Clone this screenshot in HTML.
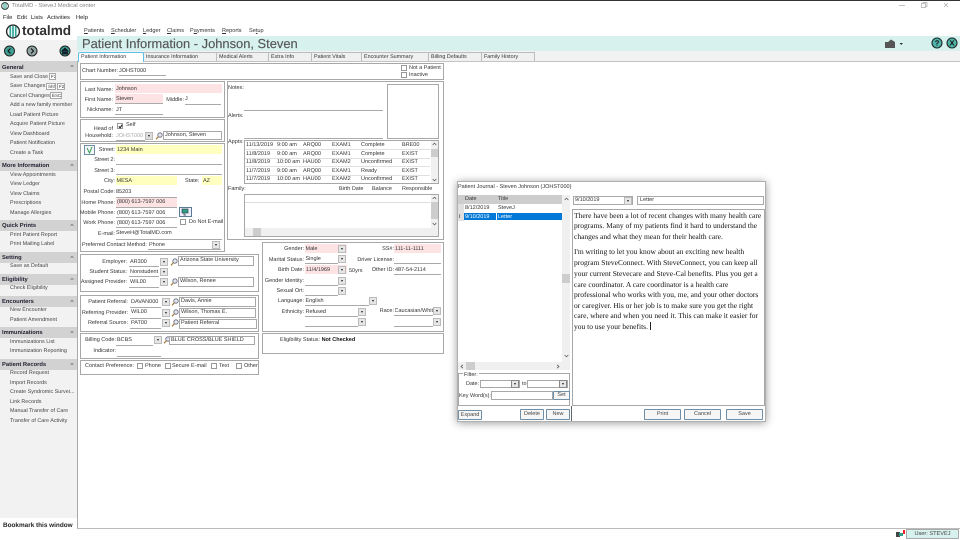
<!DOCTYPE html>
<html><head><meta charset="utf-8"><title>TotalMD</title>
<style>
html,body{margin:0;padding:0;background:#fff}
#p{position:relative;width:960px;height:540px;overflow:hidden;background:#fff;font-family:"Liberation Sans",sans-serif;font-size:5.5px;color:#333;text-rendering:geometricPrecision;filter:blur(.3px)}
#p div,#p span,#p svg{position:absolute}
.t{white-space:nowrap;line-height:8px;height:8px}
.r{text-align:right}
.h{background:#d2d2d2;left:0;width:77px;height:11px}
.hh{left:2px;font-weight:bold;font-size:5.8px;color:#223;margin-top:.8px}
.c{left:70px;width:4px;height:4px}
.i{left:10px;color:#444;font-size:5.4px}
.n{font-size:5.6px;margin-top:.5px}
.g{border:1px solid #a8a8a8;box-sizing:border-box;background:#fff}
.u{height:1px;background:#aaa}
.pk{background:#fde3e3}
.ye{background:#ffffbf}
.b{width:8px;height:8px;background:#e6e6e6;border:1px solid #bbb;box-sizing:border-box}
.b:after{content:"";position:absolute;left:1.5px;top:2px;border:1.5px solid transparent;border-top:2px solid #222;}
.x{border:1px solid #a8a8a8;box-sizing:border-box;background:#fff;white-space:nowrap;line-height:7px;padding-left:1px;overflow:hidden}
.k{width:6px;height:6px;border:1px solid #999;box-sizing:border-box;background:#fff}
.tab{height:9px;background:#f0f0f0;border:1px solid #bcbcbc;border-bottom:0;box-sizing:border-box;line-height:8.6px;white-space:nowrap;padding-left:2px;color:#333;font-size:5.4px}
.bt{border:1px solid #6f8fa8;border-radius:1px;box-sizing:border-box;background:#f6f6f6;text-align:center;line-height:9px;color:#444;height:11px}
.sb{background:#f0f0f0}
.th{background:#cdcdcd}
.jt{font-family:"Liberation Serif",serif;font-size:7.5px;color:#111;white-space:nowrap;left:574px;line-height:10px;height:10px}
.rowl{height:1px;background:#e0e0e0;left:245px;width:185px}
</style></head><body>
<div id="p">
<svg width="0" height="0"><defs>
<symbol id="m" viewBox="0 0 8 8"><circle cx="5" cy="3" r="2.2" fill="#dfe7f0" stroke="#667" stroke-width=".8"/><path d="M3.5 4.5L1 7.3" stroke="#a67b3a" stroke-width="1.2"/></symbol>
<symbol id="ch" viewBox="0 0 6 4"><path d="M.8 3.2L3 1l2.2 2.2" fill="none" stroke="#555" stroke-width=".9"/></symbol>
</defs></svg>

<!-- window top -->
<div style="left:0;top:0;width:960px;height:1px;background:#333"></div>
<svg style="left:1px;top:2px" width="8" height="8" viewBox="0 0 8 8"><circle cx="4" cy="4" r="3.4" fill="none" stroke="#333"/><path d="M3 1v6M5 1v6" stroke="#2a9d8f"/></svg>
<span class="t" style="left:12px;top:2px;color:#888;font-size:5.8px">TotalMD - SteveJ Medical center</span>
<svg style="left:898px;top:1px" width="60" height="9" viewBox="0 0 60 9"><path d="M1 4.5h6" stroke="#aaa" stroke-width=".7"/><path d="M23.5 2.5h4v4h-4zM25 2.5v-1h4v4h-1.5" fill="none" stroke="#aaa" stroke-width=".7"/><path d="M46 2l4 4M50 2l-4 4" stroke="#aaa" stroke-width=".7"/></svg>
<span class="t" style="left:3px;top:14px;font-size:5.8px;color:#222">File</span>
<span class="t" style="left:17px;top:14px;font-size:5.8px;color:#222">Edit</span>
<span class="t" style="left:31px;top:14px;font-size:5.8px;color:#222">Lists</span>
<span class="t" style="left:47px;top:14px;font-size:5.8px;color:#222">Activities</span>
<span class="t" style="left:76px;top:14px;font-size:5.8px;color:#222">Help</span>

<!-- logo -->
<svg style="left:5px;top:24px" width="16" height="15" viewBox="0 0 16 15"><circle cx="8" cy="7.5" r="6.4" fill="none" stroke="#2c2c2c" stroke-width="1.4"/><path d="M5.3 2.5v10M8 2v11M10.7 2.500v10" stroke="#37a69b" stroke-width="1.7"/></svg>
<span class="t" style="left:22px;top:23px;height:16px;line-height:16px;font-size:13.6px;font-weight:bold;color:#333">totalmd</span>

<!-- nav -->
<span class="t n" style="left:84px;top:26px"><u>P</u>atients</span>
<span class="t n" style="left:111px;top:26px"><u>S</u>cheduler</span>
<span class="t n" style="left:143px;top:26px"><u>L</u>edger</span>
<span class="t n" style="left:167px;top:26px"><u>C</u>laims</span>
<span class="t n" style="left:190px;top:26px">P<u>a</u>yments</span>
<span class="t n" style="left:222px;top:26px"><u>R</u>eports</span>
<span class="t n" style="left:249px;top:26px">Se<u>t</u>up</span>

<!-- band -->
<div style="left:77px;top:36px;width:883px;height:15px;background:#d7f1ee"></div>
<span class="t" style="left:82px;top:36px;height:16px;line-height:16px;font-size:12.9px;color:#555;-webkit-text-stroke:.15px #555">Patient Information - Johnson, Steven</span>
<div style="left:77px;top:51px;width:883px;height:10px;background:#f2f2f2"></div>
<svg style="left:884px;top:39px" width="20" height="10" viewBox="0 0 20 10"><path d="M1 3h3l3-2.5 4 2.500v6H1z" fill="#555"/><path d="M15.500 4h3.500l-1.750 2z" fill="#333"/></svg>
<svg style="left:930px;top:37px" width="28" height="13" viewBox="0 0 28 13"><circle cx="7" cy="6" r="5" fill="#4fb3a8" stroke="#1d2b2b" stroke-width="1.100"/><text x="7" y="8.700" font-size="7.500" font-weight="bold" text-anchor="middle" fill="#111" font-family="Liberation Sans">?</text><circle cx="22" cy="6" r="5" fill="#4fb3a8" stroke="#1d2b2b" stroke-width="1.100"/><text x="22" y="8.700" font-size="7.500" font-weight="bold" text-anchor="middle" fill="#111" font-family="Liberation Sans">X</text></svg>

<!-- tabs -->
<div class="tab" style="left:143px;top:52px;width:74px">Insurance Information</div>
<div class="tab" style="left:216px;top:52px;width:53px">Medical Alerts</div>
<div class="tab" style="left:268px;top:52px;width:44px">Extra Info</div>
<div class="tab" style="left:311px;top:52px;width:51px">Patient Vitals</div>
<div class="tab" style="left:361px;top:52px;width:68px">Encounter Summary</div>
<div class="tab" style="left:428px;top:52px;width:54px">Billing Defaults</div>
<div class="tab" style="left:481px;top:52px;width:54px">Family History</div>
<div class="tab" style="left:78px;top:52px;width:66px;height:10px;background:#fff;border:1px solid #5cc0e8;border-bottom:0;border-radius:2px 2px 0 0;z-index:2">Patient Information</div>

<!-- sidebar -->
<div style="left:0;top:40px;width:77px;height:478px;background:#f2f2f2"></div>
<svg style="left:4px;top:45px" width="68" height="12" viewBox="0 0 68 12"><circle cx="5.500" cy="6" r="5" fill="#3f9f95" stroke="#222"/><path d="M6.500 3.500L4 6l2.500 2.500" fill="none" stroke="#111" stroke-width="1.100"/><circle cx="28" cy="6" r="5" fill="#8fa3a0" stroke="#222"/><path d="M27 3.500L29.500 6 27 8.500" fill="none" stroke="#111" stroke-width="1.100"/><circle cx="61" cy="6" r="5" fill="#3f9f95" stroke="#222"/><path d="M57.500 6.200L61 3l3.500 3.200M58.500 6v3h5V6" fill="#123" stroke="#111" stroke-width=".7"/></svg>

<div class="h" style="top:61px"></div><span class="t hh" style="top:63px">General</span><svg class="c" style="top:64px"><use href="#ch"/></svg>
<span class="t i" style="top:72.500px">Save and Close</span><div class="x" style="left:49px;top:73px;width:7px;height:7px;font-size:4.500px;line-height:5px;padding:0 0 0 1px">F3</div>
<span class="t i" style="top:82px">Save Changes</span><div class="x" style="left:46px;top:82.500px;width:10px;height:7px;font-size:4.500px;line-height:5px">Shft</div><div class="x" style="left:57px;top:82.500px;width:8px;height:7px;font-size:4.500px;line-height:5px">F2</div>
<span class="t i" style="top:91.500px">Cancel Changes</span><div class="x" style="left:50px;top:92px;width:12px;height:7px;font-size:4.500px;line-height:5px">ESC</div>
<span class="t i" style="top:101px">Add a new family member</span>
<span class="t i" style="top:110.500px">Load Patient Picture</span>
<span class="t i" style="top:120px">Acquire Patient Picture</span>
<span class="t i" style="top:129.500px">View Dashboard</span>
<span class="t i" style="top:139px">Patient Notification</span>
<span class="t i" style="top:148.500px">Create a Task</span>

<div class="h" style="top:160px"></div><span class="t hh" style="top:161.500px">More Information</span><svg class="c" style="top:163px"><use href="#ch"/></svg>
<span class="t i" style="top:170.500px">View Appointments</span>
<span class="t i" style="top:180px">View Ledger</span>
<span class="t i" style="top:189.500px">View Claims</span>
<span class="t i" style="top:199px">Prescriptions</span>
<span class="t i" style="top:208.500px">Manage Allergies</span>

<div class="h" style="top:220px"></div><span class="t hh" style="top:221.500px">Quick Prints</span><svg class="c" style="top:223px"><use href="#ch"/></svg>
<span class="t i" style="top:230.500px">Print Patient Report</span>
<span class="t i" style="top:240px">Print Mailing Label</span>

<div class="h" style="top:252px"></div><span class="t hh" style="top:253px">Setting</span><svg class="c" style="top:255px"><use href="#ch"/></svg>
<span class="t i" style="top:262px">Save as Default</span>

<div class="h" style="top:274px"></div><span class="t hh" style="top:275px">Eligibility</span><svg class="c" style="top:277px"><use href="#ch"/></svg>
<span class="t i" style="top:284px">Check Eligibility</span>

<div class="h" style="top:296px"></div><span class="t hh" style="top:297px">Encounters</span><svg class="c" style="top:299px"><use href="#ch"/></svg>
<span class="t i" style="top:306px">New Encounter</span>
<span class="t i" style="top:315.500px">Patient Amendment</span>

<div class="h" style="top:327px"></div><span class="t hh" style="top:328.500px">Immunizations</span><svg class="c" style="top:330px"><use href="#ch"/></svg>
<span class="t i" style="top:337.500px">Immunizations List</span>
<span class="t i" style="top:347px">Immunization Reporting</span>

<div class="h" style="top:359px"></div><span class="t hh" style="top:360px">Patient Records</span><svg class="c" style="top:362px"><use href="#ch"/></svg>
<span class="t i" style="top:369px">Record Request</span>
<span class="t i" style="top:378.500px">Import Records</span>
<span class="t i" style="top:388px">Create Syndromic Survei...</span>
<span class="t i" style="top:397.500px">Link Records</span>
<span class="t i" style="top:407px">Manual Transfer of Care</span>
<span class="t i" style="top:416.500px">Transfer of Care Activity</span>
<span class="t" style="left:3px;top:521.500px;font-weight:bold;font-size:6.400px;color:#222">Bookmark this window</span>

<!-- content frame -->
<div style="left:77px;top:61px;width:1px;height:468px;background:#aaa"></div>
<div style="left:77px;top:528px;width:883px;height:1px;background:#bbb"></div>
<div style="left:78px;top:61px;width:882px;height:1px;background:#c4c4c4"></div>

<!-- panels -->
<div class="g" style="left:80px;top:63px;width:364px;height:17px"></div>
<div class="g" style="left:80px;top:81px;width:145px;height:37px"></div>
<div class="g" style="left:80px;top:119px;width:145px;height:23px"></div>
<div class="g" style="left:80px;top:143px;width:145px;height:109px"></div>
<div class="g" style="left:80px;top:254px;width:179px;height:38px"></div>
<div class="g" style="left:80px;top:295px;width:179px;height:37px"></div>
<div class="g" style="left:80px;top:333px;width:179px;height:26px"></div>
<div class="g" style="left:80px;top:360px;width:179px;height:15px"></div>
<div class="g" style="left:227px;top:81px;width:217px;height:159px"></div>
<div class="g" style="left:262px;top:242px;width:182px;height:90px"></div>
<div class="g" style="left:262px;top:333px;width:182px;height:21px"></div>

<!-- chart -->
<span class="t" style="left:82px;top:67px">Chart Number:</span><span class="t" style="left:119px;top:66.500px">JOHST000</span><div class="u" style="left:119px;top:75px;width:47px"></div>
<div class="k" style="left:401px;top:65px"></div><span class="t" style="left:409px;top:63.500px">Not a Patient</span>
<div class="k" style="left:401px;top:72px"></div><span class="t" style="left:409px;top:70.500px">Inactive</span>

<!-- name -->
<span class="t r" style="right:847px;top:86px">Last Name:</span><div class="pk" style="left:115px;top:84px;width:107px;height:9px"></div><span class="t" style="left:116px;top:84.500px">Johnson</span>
<span class="t r" style="right:847px;top:95.500px">First Name:</span><div class="pk" style="left:115px;top:94px;width:48px;height:9px"></div><span class="t" style="left:116px;top:95px">Steven</span><div class="u" style="left:115px;top:103px;width:48px"></div>
<span class="t r" style="right:776px;top:95.500px">Middle:</span><span class="t" style="left:185px;top:95px">J</span><div class="u" style="left:185px;top:104px;width:36px"></div>
<span class="t r" style="right:847px;top:106px">Nickname:</span><span class="t" style="left:116px;top:105.500px">JT</span><div class="u" style="left:115px;top:114px;width:48px"></div>

<!-- head -->
<span class="t r" style="right:847px;top:124.500px">Head of</span><span class="t r" style="right:847px;top:131.500px">Household:</span>
<div class="k" style="left:117px;top:123px"></div><svg style="left:118px;top:124px" width="5" height="5" viewBox="0 0 5 5"><path d="M.8 2.300l1.300 1.500L4.200.8" fill="none" stroke="#111"/></svg><span class="t" style="left:126px;top:121px">Self</span>
<span class="t" style="left:116px;top:131.500px;color:#aaa">JOHST000</span><div class="u" style="left:116px;top:140px;width:29px"></div><div class="b" style="left:145px;top:132px;background:#ddd"></div>
<svg style="left:155px;top:132px" width="8" height="8"><use href="#m"/></svg>
<div class="x" style="left:163px;top:131px;width:59px;height:9px">Johnson, Steven</div>

<!-- address -->
<div style="left:84px;top:145px;width:11px;height:10px;border:1px solid #6f8fa8;box-sizing:border-box;background:#f6f6f6"></div><svg style="left:86px;top:146px" width="7" height="8" viewBox="0 0 7 8"><path d="M1 2l2.500 5L6 1" fill="none" stroke="#3aa05a" stroke-width="1"/></svg>
<span class="t r" style="right:845px;top:146px">Street:</span><div class="ye" style="left:116px;top:145px;width:106px;height:9px"></div><span class="t" style="left:117px;top:145.500px">1234 Main</span>
<span class="t r" style="right:845px;top:156px">Street 2:</span><div class="u" style="left:116px;top:164px;width:106px"></div>
<span class="t r" style="right:845px;top:166.500px">Street 3:</span><div class="u" style="left:116px;top:174px;width:106px"></div>
<span class="t r" style="right:845px;top:177px">City:</span><div class="ye" style="left:116px;top:176px;width:61px;height:9px"></div><span class="t" style="left:116.500px;top:176.500px">MESA</span>
<span class="t" style="left:185px;top:177px">State:</span><div class="ye" style="left:202px;top:176px;width:20px;height:9px"></div><span class="t" style="left:203px;top:176.500px">AZ</span>
<span class="t r" style="right:845px;top:188px">Postal Code:</span><span class="t" style="left:116px;top:187.500px">85203</span><div class="u" style="left:116px;top:197px;width:61px"></div>
<span class="t r" style="right:845px;top:198.500px">Home Phone:</span><div class="pk" style="left:116px;top:198px;width:61px;height:9px"></div><span class="t" style="left:117px;top:198px">(800) 613-7597 006</span><div class="u" style="left:116px;top:207px;width:61px"></div>
<span class="t r" style="right:845px;top:209px">Mobile Phone:</span><span class="t" style="left:117px;top:208.500px">(800) 613-7597 006</span><div class="u" style="left:116px;top:217px;width:61px"></div>
<span class="t r" style="right:845px;top:219px">Work Phone:</span><span class="t" style="left:117px;top:218.500px">(800) 613-7597 006</span><div class="u" style="left:116px;top:227px;width:61px"></div>
<div style="left:179px;top:207px;width:13px;height:10px;border:1px solid #5a7a95;box-sizing:border-box;background:#eef"></div><svg style="left:181px;top:208px" width="9" height="8" viewBox="0 0 9 8"><rect x="1" y="1" width="6" height="4" fill="#2e9e8c" stroke="#233" stroke-width=".6"/><path d="M3 5v2h2" stroke="#233" fill="none" stroke-width=".7"/></svg>
<div class="k" style="left:180px;top:219px"></div><span class="t" style="left:189px;top:218px">Do Not E-mail</span>
<span class="t r" style="right:845px;top:229.500px">E-mail:</span><span class="t" style="left:116px;top:229px">SteveH@TotalMD.com</span><div class="u" style="left:116px;top:239px;width:106px"></div>
<span class="t" style="left:82px;top:241px">Preferred Contact Method:</span><span class="t" style="left:149px;top:240.500px">Phone</span><div class="b" style="left:212px;top:241px"></div><div class="u" style="left:148px;top:249px;width:73px"></div>

<!-- employer -->
<span class="t r" style="right:833px;top:258px">Employer:</span><span class="t" style="left:130px;top:257.500px">AR300</span><div class="b" style="left:160px;top:258px"></div><svg style="left:170px;top:258px" width="8" height="8"><use href="#m"/></svg><div class="x" style="left:178px;top:256px;width:76px;height:10px">Arizona State University</div><div class="u" style="left:129px;top:266px;width:30px"></div>
<span class="t r" style="right:833px;top:268px">Student Status:</span><span class="t" style="left:130px;top:267.500px">Nonstudent</span><div class="b" style="left:160px;top:268px"></div><div class="u" style="left:129px;top:276px;width:30px"></div>
<span class="t r" style="right:833px;top:278px">Assigned Provider:</span><span class="t" style="left:130px;top:277.500px">WIL00</span><div class="b" style="left:160px;top:278px"></div><svg style="left:170px;top:278px" width="8" height="8"><use href="#m"/></svg><div class="x" style="left:178px;top:277px;width:76px;height:10px">Wilson, Renee</div><div class="u" style="left:129px;top:287px;width:30px"></div>

<!-- referral -->
<span class="t r" style="right:832px;top:298px">Patient Referral:</span><span class="t" style="left:131px;top:297.500px">DAVAN000</span><div class="b" style="left:162px;top:298px"></div><svg style="left:171px;top:298px" width="8" height="8"><use href="#m"/></svg><div class="x" style="left:179px;top:297px;width:77px;height:10px">Davis, Annie</div><div class="u" style="left:130px;top:307px;width:31px"></div>
<span class="t r" style="right:832px;top:309px">Referring Provider:</span><span class="t" style="left:131px;top:308px">WIL00</span><div class="b" style="left:162px;top:309px"></div><svg style="left:171px;top:309px" width="8" height="8"><use href="#m"/></svg><div class="x" style="left:179px;top:308px;width:77px;height:10px">Wilson, Thomas E.</div><div class="u" style="left:130px;top:318px;width:31px"></div>
<span class="t r" style="right:832px;top:319px">Referral Source:</span><span class="t" style="left:131px;top:318.500px">PAT00</span><div class="b" style="left:162px;top:319px"></div><svg style="left:171px;top:319px" width="8" height="8"><use href="#m"/></svg><div class="x" style="left:179px;top:319px;width:78px;height:10px">Patient Referral</div><div class="u" style="left:130px;top:328px;width:31px"></div>

<!-- billing -->
<span class="t r" style="right:844px;top:336px">Billing Code:</span><span class="t" style="left:117px;top:335.500px">BCBS</span><div class="b" style="left:154px;top:336px"></div><svg style="left:163px;top:336px" width="8" height="8"><use href="#m"/></svg><div class="x" style="left:169px;top:336px;width:86px;height:9px">BLUE CROSS/BLUE SHIELD</div><div class="u" style="left:116px;top:345px;width:37px"></div>
<span class="t r" style="right:844px;top:347px">Indicator:</span><div class="u" style="left:117px;top:356px;width:44px"></div>

<!-- contact pref -->
<span class="t" style="left:85px;top:362px">Contact Preference:</span>
<div class="k" style="left:137px;top:363px"></div><span class="t" style="left:145px;top:362px">Phone</span>
<div class="k" style="left:165px;top:363px"></div><span class="t" style="left:172px;top:362px">Secure E-mail</span>
<div class="k" style="left:211px;top:363px"></div><span class="t" style="left:219px;top:362px">Text</span>
<div class="k" style="left:236px;top:363px"></div><span class="t" style="left:244px;top:362px">Other</span>

<!-- notes -->
<span class="t" style="left:228px;top:84px">Notes:</span><div class="u" style="left:244px;top:110px;width:139px"></div>
<span class="t" style="left:228px;top:112px">Alerts:</span><div class="u" style="left:244px;top:138px;width:139px"></div>
<div class="g" style="left:387px;top:84px;width:52px;height:55px;border-width:1px"></div>
<span class="t" style="left:228px;top:138px">Appts:</span>
<div class="g" style="left:244px;top:140px;width:195px;height:44px"></div>
<div class="sb" style="left:431px;top:141px;width:7px;height:42px"></div><div class="th" style="left:431px;top:149px;width:7px;height:8px"></div>
<svg style="left:432px;top:142px;" width="5" height="4"><use href="#ch"/></svg><svg style="left:432px;top:178px;transform:scaleY(-1)" width="5" height="4"><use href="#ch"/></svg>
<div class="rowl" style="top:149px"></div><div class="rowl" style="top:157.500px"></div><div class="rowl" style="top:166px"></div><div class="rowl" style="top:174.500px"></div>
<span class="t" style="left:246px;top:141px">11/13/2019</span><span class="t" style="left:277px;top:141px">9:00 am</span><span class="t" style="left:303px;top:141px">ARQ00</span><span class="t" style="left:332px;top:141px">EXAM1</span><span class="t" style="left:361px;top:141px">Complete</span><span class="t" style="left:402px;top:141px">BRE00</span>
<span class="t" style="left:246px;top:149.500px">11/8/2019</span><span class="t" style="left:277px;top:149.500px">9:00 am</span><span class="t" style="left:303px;top:149.500px">ARQ00</span><span class="t" style="left:332px;top:149.500px">EXAM1</span><span class="t" style="left:361px;top:149.500px">Complete</span><span class="t" style="left:402px;top:149.500px">EXIST</span>
<span class="t" style="left:246px;top:158px">11/8/2019</span><span class="t" style="left:277px;top:158px">10:00 am</span><span class="t" style="left:303px;top:158px">HAU00</span><span class="t" style="left:332px;top:158px">EXAM2</span><span class="t" style="left:361px;top:158px">Unconfirmed</span><span class="t" style="left:402px;top:158px">EXIST</span>
<span class="t" style="left:246px;top:166.500px">11/7/2019</span><span class="t" style="left:277px;top:166.500px">9:00 am</span><span class="t" style="left:303px;top:166.500px">ARQ00</span><span class="t" style="left:332px;top:166.500px">EXAM1</span><span class="t" style="left:361px;top:166.500px">Ready</span><span class="t" style="left:402px;top:166.500px">EXIST</span>
<span class="t" style="left:246px;top:175px">11/7/2019</span><span class="t" style="left:277px;top:175px">10:00 am</span><span class="t" style="left:303px;top:175px">HAU00</span><span class="t" style="left:332px;top:175px">EXAM2</span><span class="t" style="left:361px;top:175px">Unconfirmed</span><span class="t" style="left:402px;top:175px">EXIST</span>
<span class="t" style="left:228px;top:185px">Family:</span><span class="t" style="left:339px;top:185px">Birth Date</span><span class="t" style="left:372px;top:185px">Balance</span><span class="t" style="left:402px;top:185px">Responsible</span>
<div class="g" style="left:244px;top:194px;width:195px;height:43px"></div>
<div class="u" style="left:245px;top:202px;width:185px;background:#ddd"></div>
<div class="sb" style="left:431px;top:195px;width:7px;height:41px"></div><div class="th" style="left:431px;top:202px;width:7px;height:17px"></div>
<svg style="left:432px;top:196px;" width="5" height="4"><use href="#ch"/></svg><svg style="left:432px;top:222px;transform:scaleY(-1)" width="5" height="4"><use href="#ch"/></svg>
<div class="sb" style="left:245px;top:228px;width:186px;height:8px"></div><div class="th" style="left:253px;top:228px;width:8px;height:8px"></div>

<!-- gender -->
<span class="t r" style="right:656px;top:245px">Gender:</span><div class="pk" style="left:305px;top:244px;width:42px;height:9px"></div><span class="t" style="left:305.500px;top:244.500px">Male</span><div class="b" style="left:338px;top:245px"></div>
<span class="t r" style="right:656px;top:255.500px">Marital Status:</span><span class="t" style="left:305.500px;top:255px">Single</span><div class="b" style="left:338px;top:255px"></div><div class="u" style="left:305px;top:263px;width:33px"></div>
<span class="t r" style="right:656px;top:266px">Birth Date:</span><div class="pk" style="left:305px;top:265px;width:42px;height:9px"></div><span class="t" style="left:306px;top:265.500px">11/4/1969</span><div class="b" style="left:338px;top:266px"></div><span class="t" style="left:349px;top:266.500px">50yrs</span>
<span class="t r" style="right:656px;top:277px">Gender Identity:</span><div class="b" style="left:338px;top:277px"></div><div class="u" style="left:305px;top:285px;width:33px"></div>
<span class="t r" style="right:656px;top:287px">Sexual Ort:</span><div class="b" style="left:338px;top:287px"></div><div class="u" style="left:305px;top:295px;width:33px"></div>
<span class="t r" style="right:656px;top:297px">Language:</span><span class="t" style="left:305.500px;top:296.500px">English</span><div class="b" style="left:369px;top:297px"></div><div class="u" style="left:305px;top:305px;width:64px"></div>
<span class="t r" style="right:656px;top:308px">Ethnicity:</span><span class="t" style="left:305.500px;top:307.500px">Refused</span><div class="b" style="left:358px;top:308px"></div><div class="u" style="left:305px;top:316px;width:53px"></div>
<div class="b" style="left:358px;top:318px"></div><div class="u" style="left:305px;top:326px;width:53px"></div>
<span class="t r" style="right:566px;top:245px">SS#:</span><div class="pk" style="left:394px;top:244px;width:47px;height:9px"></div><span class="t" style="left:395px;top:244.500px">111-11-1111</span>
<span class="t r" style="right:566px;top:255.500px">Driver License:</span><div class="u" style="left:394px;top:263px;width:47px"></div>
<span class="t r" style="right:566px;top:266px">Other ID:</span><span class="t" style="left:395px;top:265.500px">487-54-2114</span><div class="u" style="left:394px;top:274px;width:47px"></div>
<span class="t r" style="right:566px;top:307px">Race:</span><span class="t" style="left:394.500px;top:306.500px;width:38px;overflow:hidden">Caucasian/White</span><div class="b" style="left:433px;top:307px"></div><div class="u" style="left:394px;top:315px;width:39px"></div>
<div class="b" style="left:433px;top:318px"></div><div class="u" style="left:394px;top:326px;width:39px"></div>
<span class="t" style="left:280px;top:336px">Eligibility Status: <b style="color:#111">Not Checked</b></span>

<!-- journal window -->
<div style="left:457px;top:181px;width:309px;height:241px;background:#fff;border:1px solid #b0b0b0;box-sizing:border-box;box-shadow:0 1px 8px rgba(0,0,0,.4)"></div>
<span class="t" style="left:458px;top:183px">Patient Journal - Steven Johnson (JOHST000)</span>
<div class="th" style="left:458px;top:195px;width:104px;height:9px"></div>
<div class="th" style="left:458px;top:204px;width:6px;height:17px;background:#e0e0e0"></div>
<span class="t" style="left:465px;top:195px">Date</span><span class="t" style="left:498px;top:195px">Title</span>
<span class="t" style="left:465px;top:204px">8/12/2019</span><span class="t" style="left:498px;top:204px">SteveJ</span>
<div style="left:464px;top:213px;width:98px;height:7px;background:#0078d7"></div>
<span class="t" style="left:465px;top:212.500px;color:#fff">9/10/2019</span><span class="t" style="left:498px;top:212.500px;color:#fff">Letter</span>
<div style="left:496px;top:213px;width:1px;height:7px;background:#fff"></div>
<span class="t" style="left:459px;top:212.500px;color:#222">I</span>
<div class="sb" style="left:562px;top:195px;width:8px;height:167px"></div><div class="th" style="left:562px;top:274px;width:8px;height:9px"></div>
<svg style="left:563.500px;top:197px;" width="5" height="4"><use href="#ch"/></svg><svg style="left:563.500px;top:354px;transform:scaleY(-1)" width="5" height="4"><use href="#ch"/></svg>
<div class="sb" style="left:458px;top:362px;width:112px;height:8px"></div><div class="th" style="left:466px;top:362px;width:9px;height:8px"></div>
<svg style="left:460px;top:364px" width="4" height="5" viewBox="0 0 4 5"><path d="M3 .8L1 2.500 3 4.200" fill="none" stroke="#555" stroke-width=".8"/></svg><svg style="left:556px;top:364px" width="4" height="5" viewBox="0 0 4 5"><path d="M1 .8L3 2.500 1 4.200" fill="none" stroke="#555" stroke-width=".8"/></svg>
<div class="g" style="left:458px;top:373px;width:112px;height:33px"></div>
<span class="t" style="left:463px;top:370.500px;background:#fff;padding:0 1px">Filter:</span>
<span class="t" style="left:466px;top:379.500px">Date:</span>
<div class="x" style="left:480px;top:380px;width:40px;height:8px"></div><div class="b" style="left:511px;top:380px;border-color:#888"></div>
<span class="t" style="left:522px;top:379.500px">to</span>
<div class="x" style="left:527px;top:380px;width:41px;height:8px"></div><div class="b" style="left:559px;top:380px;border-color:#888"></div>
<span class="t" style="left:459px;top:392px">Key Word(s):</span>
<div class="x" style="left:491px;top:391px;width:62px;height:9px"></div>
<div class="bt" style="left:553px;top:391px;width:17px;height:9px;line-height:7px">Set</div>
<div class="bt" style="left:458px;top:410px;width:24px;height:10px;line-height:8px">Expand</div>
<div class="bt" style="left:520px;top:409px;width:24px">Delete</div>
<div class="bt" style="left:546px;top:409px;width:24px">New</div>
<div style="left:571px;top:406px;width:1px;height:15px;background:#666"></div>
<div class="g" style="left:572px;top:209px;width:193px;height:197px"></div>
<div class="bt" style="left:644px;top:409px;width:37px">Print</div>
<div class="bt" style="left:684px;top:409px;width:37px">Cancel</div>
<div class="bt" style="left:726px;top:409px;width:37px">Save</div>
<div class="x" style="left:573px;top:196px;width:60px;height:9px;font-size:5.500px">9/10/2019</div><div class="b" style="left:624px;top:197px"></div>
<div class="x" style="left:637px;top:196px;width:127px;height:9px;padding-left:2px">Letter</div>
<span class="jt" style="top:210.700px">There have been a lot of recent changes with many health care</span>
<span class="jt" style="top:221px">programs. Many of my patients find it hard to understand the</span>
<span class="jt" style="top:232px">changes and what they mean for their health care.</span>
<span class="jt" style="top:247px">I'm writing to let you know about an exciting new health</span>
<span class="jt" style="top:258px">program SteveConnect. With SteveConnect, you can keep all</span>
<span class="jt" style="top:268.700px">your current Stevecare and Steve-Cal benefits. Plus you get a</span>
<span class="jt" style="top:279.700px">care coordinator. A care coordinator is a health care</span>
<span class="jt" style="top:290.300px">professional who works with you, me, and your other doctors</span>
<span class="jt" style="top:301px">or caregiver. His or her job is to make sure you get the right</span>
<span class="jt" style="top:311.300px">care, where and when you need it. This can make it easier for</span>
<span class="jt" style="top:321.700px">you to use your benefits.</span>
<div style="left:650px;top:322px;width:1px;height:8px;background:#222"></div>

<!-- status -->
<svg style="left:895px;top:529px" width="11" height="10" viewBox="0 0 11 10"><rect x="1" y="3" width="4" height="5" fill="#444"/><rect x="4" y="4" width="4" height="3" fill="#2e9e8c"/><rect x="8" y="1" width="2" height="4" fill="#e22"/></svg>
<div style="left:906px;top:529px;width:53px;height:10px;background:#d7f1ee;border:1px solid #aaa;box-sizing:border-box;text-align:center;line-height:8px;font-size:5.600px;color:#444">User: STEVEJ</div>
</div>
</body></html>
